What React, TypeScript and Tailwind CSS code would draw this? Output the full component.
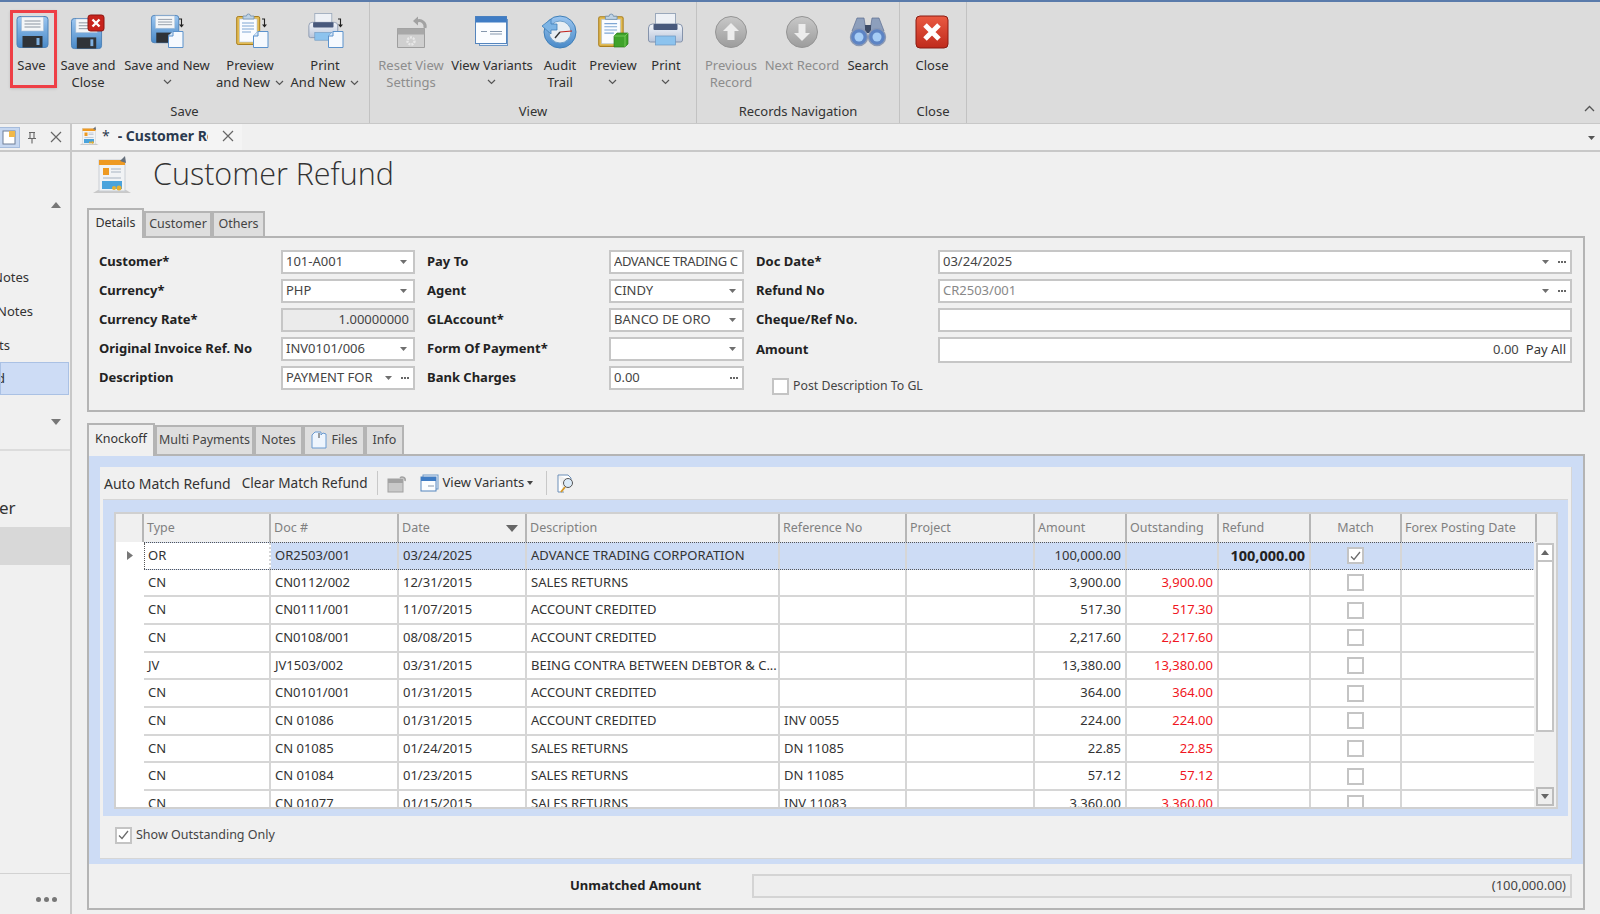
import React from 'react';

const Floppy = ({ x = 0, y = 0, s = 1 }: { x?: number; y?: number; s?: number }) => (
  <g transform={`translate(${x} ${y}) scale(${s})`}>
    <rect x="0.5" y="0.5" width="31" height="31" rx="3" fill="url(#blueG)" stroke="#4d82b8" />
    <rect x="5" y="1" width="22" height="14" fill="#f4f6f8" stroke="#a9bfd6" strokeWidth="0.6" />
    <path d="M8 5h16M8 8h16M8 11h16" stroke="#8a94a0" strokeWidth="1" />
    <rect x="6" y="20" width="20" height="11.5" fill="#2f3338" />
    <rect x="20" y="22" width="3" height="7" fill="#7fb0e0" />
  </g>
);

const NewPage = ({ x = 0, y = 0 }: { x?: number; y?: number }) => (
  <g transform={`translate(${x} ${y})`}>
    <path d="M0.5 5L5 0.5h10v16h-14.5z" fill="#f5f9fe" stroke="#5b92cc" />
    <path d="M5 0.5v4.5h-4.5" fill="#d5e5f6" stroke="#5b92cc" />
  </g>
);

const TinyArrow = ({ x = 0, y = 0 }: { x?: number; y?: number }) => (
  <g transform={`translate(${x} ${y})`}>
    <path d="M0 1h2.5v6" fill="none" stroke="#222" strokeWidth="1.1" />
    <path d="M0 6.5h5l-2.5 3z" fill="#222" />
  </g>
);

const Clipboard = ({ x = 0, y = 0, s = 1 }: { x?: number; y?: number; s?: number }) => (
  <g transform={`translate(${x} ${y}) scale(${s})`}>
    <rect x="0.7" y="3.5" width="23" height="28" rx="1.5" fill="#e3bb52" stroke="#a97f1f" />
    <rect x="3.5" y="6" width="17.5" height="23" fill="#fafcff" stroke="#b5c4d6" strokeWidth="0.6" />
    <path d="M6 10h12M6 13h12M6 16h12M6 19h9" stroke="#7ea6d4" strokeWidth="1.1" />
    <path d="M7 6V3h3.5a2 2 0 0 1 4 0H18v3z" fill="#bfd3e6" stroke="#6f8fae" strokeWidth="0.8" />
  </g>
);

const Printer = ({ x = 0, y = 0, s = 1 }: { x?: number; y?: number; s?: number }) => (
  <g transform={`translate(${x} ${y}) scale(${s})`}>
    <rect x="8" y="0.5" width="20" height="14" fill="#eef1f6" stroke="#9aa8bb" />
    <path d="M1 15a4 4 0 0 1 4-4h26a4 4 0 0 1 4 4v12a2 2 0 0 1-2 2H3a2 2 0 0 1-2-2z" fill="url(#printG)" stroke="#8593ab" />
    <rect x="6" y="11" width="24" height="6" rx="1" fill="#48597c" />
    <rect x="8" y="23" width="20" height="9" fill="#8cc3ee" stroke="#6b95bf" strokeWidth="0.7" />
  </g>
);

const IconSvg = ({ children }: { children: React.ReactNode }) => (
  <svg width="40" height="40" viewBox="0 0 40 40" className="block">
    {children}
  </svg>
);

const SaveIcon = () => <IconSvg><Floppy x={4.5} y={4} /></IconSvg>;

const SaveCloseIcon = () => (
  <IconSvg>
    <Floppy x={3} y={6} s={0.97} />
    <rect x="20" y="3" width="16" height="16" rx="2.5" fill="#c8231c" stroke="#8d1510" />
    <path d="M24.5 7.5l7 7M31.5 7.5l-7 7" stroke="#fff" strokeWidth="2.4" />
  </IconSvg>
);

const SaveNewIcon = () => (
  <IconSvg>
    <Floppy x={4} y={3} s={0.88} />
    <NewPage x={21} y={19} />
    <TinyArrow x={32} y={6} />
  </IconSvg>
);

const PreviewNewIcon = () => (
  <IconSvg>
    <Clipboard x={6} y={1} />
    <NewPage x={23} y={19} />
    <TinyArrow x={32} y={6} />
  </IconSvg>
);

const PrintNewIcon = () => (
  <IconSvg>
    <Printer x={3} y={1} s={0.85} />
    <NewPage x={23} y={19} />
    <TinyArrow x={33} y={6} />
  </IconSvg>
);

const ResetViewIcon = () => (
  <IconSvg>
    <path d="M6.5 16.5h27v19h-27z" fill="#cfcfcf" stroke="#9e9e9e" />
    <rect x="6.5" y="16.5" width="27" height="6" fill="#a8a8a8" />
    <circle cx="20" cy="29" r="3.5" fill="none" stroke="#e8e8e8" strokeWidth="2.4" strokeDasharray="2 1" />
    <path d="M26 9a6 6 0 0 1 8 7" fill="none" stroke="#a2a2a2" strokeWidth="3" />
    <path d="M27 4.5v9l-5-4.5z" fill="#a2a2a2" />
  </IconSvg>
);

const ViewVariantsIcon = () => (
  <IconSvg>
    <rect x="7.5" y="7.5" width="28" height="26" fill="#eaf1fa" stroke="#6d97c6" />
    <rect x="3.5" y="4.5" width="31" height="27" fill="#fbfdff" stroke="#5585bd" />
    <rect x="3.5" y="4.5" width="31" height="6" fill="#3f7cc4" />
    <path d="M9 19.5h6M18 19.5h12M18 22h12" stroke="#8698ad" strokeWidth="1.2" />
  </IconSvg>
);

const AuditIcon = () => (
  <IconSvg>
    <circle cx="20" cy="20" r="16" fill="url(#blueG)" stroke="#3f7fb8" />
    <circle cx="20" cy="20" r="11" fill="#e8eef3" stroke="#6fa0ca" />
    <path d="M20 20l12-1" stroke="#c2221c" strokeWidth="1.2" />
    <path d="M20 20l-5 6" stroke="#333" strokeWidth="1.4" />
    <path d="M2 14l9-7v5h6v6h-6v4z" fill="#7db4e4" stroke="#3f7fb8" strokeWidth="0.8" />
  </IconSvg>
);

const PreviewIcon = () => (
  <IconSvg>
    <Clipboard x={5} y={1} s={1.06} />
    <path d="M21 24l3-3h11v11l-3 3H21z" fill="#3fa32a" stroke="#2b7a1b" strokeWidth="0.7" />
    <path d="M21 24h11v11M32 24l3-3" fill="none" stroke="#7fd262" strokeWidth="0.8" />
  </IconSvg>
);

const PrintIcon = () => <IconSvg><Printer x={1.5} y={1} /></IconSvg>;

const RoundArrow = ({ up }: { up?: boolean }) => (
  <IconSvg>
    <circle cx="20" cy="20" r="15.5" fill="url(#grayG)" stroke="#959595" />
    <path d={up ? 'M20 11l8 8h-4.5v9h-7v-9H12z' : 'M20 29l8-8h-4.5v-9h-7v9H12z'} fill="#ececec" />
  </IconSvg>
);

const BinocularsIcon = () => (
  <IconSvg>
    <path d="M9 6h7l2 13H4z" fill="#8d9fbc" stroke="#5d6f90" strokeWidth="0.7" />
    <path d="M24 6h7l5 13H22z" fill="#8d9fbc" stroke="#5d6f90" strokeWidth="0.7" />
    <rect x="17" y="13" width="6" height="8" fill="#3d4b66" />
    <circle cx="11" cy="25" r="8.5" fill="#5d84c4" stroke="#8a98b3" strokeWidth="1.4" />
    <circle cx="29" cy="25" r="8.5" fill="#5d84c4" stroke="#8a98b3" strokeWidth="1.4" />
    <circle cx="11" cy="25" r="4.5" fill="#a6cdf6" />
    <circle cx="29" cy="25" r="4.5" fill="#a6cdf6" />
  </IconSvg>
);

const CloseIcon = () => (
  <IconSvg>
    <rect x="4" y="4" width="32" height="32" rx="4" fill="url(#redG)" stroke="#8a1b12" />
    <path d="M13 13l14 14M27 13L13 27" stroke="#fff" strokeWidth="5" />
  </IconSvg>
);

const Chevron = ({ cls }: { cls?: string }) => (
  <svg width="9" height="6" viewBox="0 0 9 6" className={`inline-block ${cls ?? ''}`}>
    <path d="M1 1l3.5 3.5L8 1" fill="none" stroke="#555" strokeWidth="1.2" />
  </svg>
);

const SmallArrow = () => (
  <svg width="7" height="4" viewBox="0 0 7 4" className="shrink-0">
    <path d="M0 0h7L3.5 4z" fill="#6f6f6f" />
  </svg>
);

const Dots = () => (
  <svg width="8" height="2" viewBox="0 0 8 2" className="shrink-0">
    <path d="M0 0h2v2H0zM3 0h2v2H3zM6 0h2v2H6z" fill="#666" />
  </svg>
);

type RibbonBtn = {
  w: string;
  icon: React.ReactNode;
  lines: string[];
  chevronBelow?: boolean;
  chevronInline?: boolean;
  disabled?: boolean;
};

const RibbonButton = ({ b, marked }: { b: RibbonBtn; marked?: boolean }) => (
  <div className={`relative flex flex-col items-center pt-[10px] text-[13px] leading-[17px] ${b.w} ${b.disabled ? 'text-[#8d8d8d]' : 'text-[#2f2f2f]'}`}>
    {b.icon}
    <div className="mt-[5px] flex flex-col items-center whitespace-nowrap">
      {b.lines.map((l, i) => (
        <span key={l} className="flex items-center gap-[5px]">
          {l}
          {b.chevronInline && i === b.lines.length - 1 && <Chevron />}
        </span>
      ))}
      {b.chevronBelow && <Chevron cls="mt-[5px]" />}
    </div>
    {marked && <div className="absolute left-[6px] top-[8px] w-[47px] h-[78px] border-[3px] border-[#ee3f46] shadow-sm" />}
  </div>
);

const RibbonGroup = ({ w, label, btns, pl }: { w: string; label: string; btns: RibbonBtn[]; pl: string }) => (
  <div className={`flex flex-col h-full border-r border-[#c2c2c2] ${w}`}>
    <div className={`flex flex-1 ${pl}`}>
      {btns.map((b, i) => (
        <RibbonButton key={b.lines.join()} b={b} marked={label === 'Save' && i === 0} />
      ))}
    </div>
    <div className="h-[24px] text-center text-[13px] leading-[24px] text-[#333]">{label}</div>
  </div>
);

const Ribbon = () => (
  <div className="relative flex h-[124px] border-t-2 border-[#5a7bab] border-b border-b-[#c8c8c8] bg-[#dcdcdc]">
    <RibbonGroup
      w="w-[370px]"
      pl="pl-[4px]"
      label="Save"
      btns={[
        { w: 'w-[55px]', icon: <SaveIcon />, lines: ['Save'] },
        { w: 'w-[58px]', icon: <SaveCloseIcon />, lines: ['Save and', 'Close'] },
        { w: 'w-[100px]', icon: <SaveNewIcon />, lines: ['Save and New'], chevronBelow: true },
        { w: 'w-[66px]', icon: <PreviewNewIcon />, lines: ['Preview', 'and New'], chevronInline: true },
        { w: 'w-[84px]', icon: <PrintNewIcon />, lines: ['Print', 'And New'], chevronInline: true },
      ]}
    />
    <RibbonGroup
      w="w-[327px]"
      pl="pl-[2px]"
      label="View"
      btns={[
        { w: 'w-[78px]', icon: <ResetViewIcon />, lines: ['Reset View', 'Settings'], disabled: true },
        { w: 'w-[84px]', icon: <ViewVariantsIcon />, lines: ['View Variants'], chevronBelow: true },
        { w: 'w-[52px]', icon: <AuditIcon />, lines: ['Audit', 'Trail'] },
        { w: 'w-[54px]', icon: <PreviewIcon />, lines: ['Preview'], chevronBelow: true },
        { w: 'w-[52px]', icon: <PrintIcon />, lines: ['Print'], chevronBelow: true },
      ]}
    />
    <RibbonGroup
      w="w-[203px]"
      pl="pl-[3px]"
      label="Records Navigation"
      btns={[
        { w: 'w-[62px]', icon: <RoundArrow up />, lines: ['Previous', 'Record'], disabled: true },
        { w: 'w-[80px]', icon: <RoundArrow />, lines: ['Next Record'], disabled: true },
        { w: 'w-[52px]', icon: <BinocularsIcon />, lines: ['Search'] },
      ]}
    />
    <RibbonGroup
      w="w-[67px]"
      pl="pl-[6px]"
      label="Close"
      btns={[{ w: 'w-[52px]', icon: <CloseIcon />, lines: ['Close'] }]}
    />
    <svg width="11" height="7" viewBox="0 0 11 7" className="absolute right-[5px] bottom-[11px]">
      <path d="M1 6l4.5-4.5L10 6" fill="none" stroke="#555" strokeWidth="1.3" />
    </svg>
  </div>
);

const SideRow = ({ text, ml }: { text: string; ml: string }) => (
  <div className="h-[34px] flex items-center overflow-hidden whitespace-nowrap text-[13px] text-[#333] shrink-0">
    <span className={ml}>{text}</span>
  </div>
);

const Sidebar = () => (
  <div className="flex flex-col w-[72px] shrink-0 border-r-2 border-[#c8c8c8] bg-[#f0f0f0]">
    <div className="h-[28px] flex items-center border-b-2 border-[#c8c8c8] shrink-0">
      <div className="w-[21px] h-[21px] -ml-[1px] bg-[#c6d7f0] border border-[#a6bcdc] flex items-center justify-center">
        <svg width="15" height="15" viewBox="0 0 15 15">
          <rect x="1" y="1" width="12" height="13" fill="#fff" stroke="#6f7f97" />
          <rect x="7" y="1" width="6" height="6" fill="#f0b84a" />
        </svg>
      </div>
      <svg width="12" height="13" viewBox="0 0 12 13" className="ml-[6px]">
        <path d="M3 1.5h6M4 1.5v6M8 1.5v6M2 7.5h8M6 7.5v5" fill="none" stroke="#666" strokeWidth="1.1" />
      </svg>
      <svg width="12" height="12" viewBox="0 0 12 12" className="ml-[12px]">
        <path d="M1 1l10 10M11 1L1 11" stroke="#666" strokeWidth="1.2" />
      </svg>
    </div>
    <div className="h-[58px] flex items-end justify-end pr-[9px] pb-[2px] shrink-0">
      <svg width="10" height="6" viewBox="0 0 10 6"><path d="M5 0l5 6H0z" fill="#777" /></svg>
    </div>
    <div className="h-[51px] shrink-0" />
    <SideRow text="Notes" ml="-ml-[7px]" />
    <SideRow text="Notes" ml="-ml-[3px]" />
    <SideRow text="ts" ml="-ml-[1px]" />
    <div className="w-[69px] h-[33px] flex items-center bg-[#cddcf5] border border-[#aac1e4] text-[13px] text-[#333] overflow-hidden -mt-[1px] shrink-0">
      <span className="-ml-[4px]">d</span>
    </div>
    <div className="h-[54px] flex items-center justify-end pr-[9px] shrink-0">
      <svg width="10" height="6" viewBox="0 0 10 6"><path d="M0 0h10L5 6z" fill="#777" /></svg>
    </div>
    <div className="h-[78px] border-t-2 border-[#dcdcdc] flex items-end shrink-0 overflow-hidden text-[17px] leading-[24px] text-[#333] pb-[7px]">
      <span className="-ml-[1px]">er</span>
    </div>
    <div className="h-[38px] bg-[#d8d8d8] shrink-0" />
    <div className="flex-1" />
    <div className="h-[41px] border-t border-[#d2d2d2] flex items-center justify-end pr-[13px] pt-[10px] gap-[3px] shrink-0">
      <span className="w-[5px] h-[5px] rounded-full bg-[#777]" />
      <span className="w-[5px] h-[5px] rounded-full bg-[#777]" />
      <span className="w-[5px] h-[5px] rounded-full bg-[#777]" />
    </div>
  </div>
);

const RefundIcon = ({ size }: { size: number }) => (
  <svg width={size} height={size} viewBox="0 0 40 40" className="shrink-0">
    <path d="M1 38l5-3h28l5 3z" fill="#c9c9c9" />
    <rect x="7" y="5" width="26" height="31" fill="#f1f3f5" stroke="#c9ced4" />
    <rect x="7" y="5" width="26" height="5" fill="#ee9a22" />
    <path d="M28 6l5-5 1 7z" fill="#66707c" />
    <rect x="11" y="13" width="6" height="7" fill="#ee9a22" />
    <path d="M19 14h10M19 17h10M11 23h18" stroke="#a7b4c2" strokeWidth="1.2" />
    <rect x="10" y="26" width="20" height="8" fill="#4aa3dc" />
    <circle cx="27" cy="33" r="2.5" fill="#e8b030" />
    <circle cx="22" cy="33" r="2" fill="#e8b030" />
  </svg>
);

type FieldProps = {
  value?: string;
  arrow?: boolean;
  dots?: boolean;
  disabled?: boolean;
  right?: boolean;
  cls?: string;
  textCls?: string;
  children?: React.ReactNode;
};

const Field = ({ value, arrow, dots, disabled, right, cls, textCls, children }: FieldProps) => (
  <div className={`h-[24px] flex items-center gap-[7px] border-2 border-[#c6c6c6] pl-[3px] pr-[4px] text-[13px] ${disabled ? 'bg-[#ebebeb]' : 'bg-white'} ${cls ?? ''}`}>
    <span className={`flex-1 min-w-0 overflow-hidden whitespace-nowrap pb-[1px] ${right ? 'text-right' : ''} ${textCls ?? 'text-[#444]'}`}>{value}</span>
    {arrow && <span className="flex items-center pr-[2px]"><SmallArrow /></span>}
    {dots && <Dots />}
    {children}
  </div>
);

const FormRow = ({ label, children, last }: { label: string; children: React.ReactNode; last?: boolean }) => (
  <div className={`flex items-center ${last ? '' : 'mb-[5px]'}`}>
    <div className="w-[182px] shrink-0 whitespace-nowrap text-[13px] font-bold text-[#222]">{label}</div>
    <div className="flex-1 min-w-0">{children}</div>
  </div>
);

const Box = ({ checked, cls }: { checked?: boolean; cls?: string }) => (
  <div className={`w-[17px] h-[17px] border-2 border-[#c4c4c4] bg-white flex items-center justify-center shrink-0 ${cls ?? ''}`}>
    {checked && (
      <svg width="11" height="10" viewBox="0 0 11 10">
        <path d="M1 5.5l3 3L10 1" fill="none" stroke="#6c6c6c" strokeWidth="1.3" />
      </svg>
    )}
  </div>
);

const Tab = ({ label, active, cls, children }: { label: string; active?: boolean; cls: string; children?: React.ReactNode }) => (
  <div
    className={`flex items-center justify-center gap-[5px] text-[12.5px] border-2 border-b-0 border-[#b4b4b4] whitespace-nowrap ${cls} ${
      active ? 'bg-[#f0f0f0] text-[#333] relative z-10 -mb-[2px]' : 'bg-[#dedede] text-[#444] self-end pb-[1px]'
    }`}
  >
    {children}
    {label}
  </div>
);

const DetailsPanel = () => (
  <div>
    <div className="flex h-[28px]">
      <Tab label="Details" active cls="w-[57px] h-[30px] pb-[2px]" />
      <Tab label="Customer" cls="w-[68px] h-[25px]" />
      <Tab label="Others" cls="w-[53px] h-[25px]" />
    </div>
    <div className="w-[1498px] h-[176px] border-2 border-[#b4b4b4] flex gap-[12px] pl-[10px] pt-[12px]">
      <div className="w-[316px]">
        <FormRow label="Customer*"><Field value="101-A001" arrow /></FormRow>
        <FormRow label="Currency*"><Field value="PHP" arrow /></FormRow>
        <FormRow label="Currency Rate*"><Field value="1.00000000" disabled right /></FormRow>
        <FormRow label="Original Invoice Ref. No"><Field value="INV0101/006" arrow /></FormRow>
        <FormRow label="Description"><Field value="PAYMENT FOR" arrow dots /></FormRow>
      </div>
      <div className="w-[317px]">
        <FormRow label="Pay To"><Field value="ADVANCE TRADING C" textCls="text-[#444] tracking-[-0.4px]" /></FormRow>
        <FormRow label="Agent"><Field value="CINDY" arrow /></FormRow>
        <FormRow label="GLAccount*"><Field value="BANCO DE ORO" arrow /></FormRow>
        <FormRow label="Form Of Payment*"><Field arrow /></FormRow>
        <FormRow label="Bank Charges"><Field value="0.00" dots /></FormRow>
      </div>
      <div className="w-[816px]">
        <FormRow label="Doc Date*"><Field value="03/24/2025" arrow dots /></FormRow>
        <FormRow label="Refund No"><Field value="CR2503/001" arrow dots textCls="text-[#888]" /></FormRow>
        <FormRow label="Cheque/Ref No."><Field /></FormRow>
        <FormRow label="Amount">
          <Field value="0.00" right cls="h-[26px]"><span className="text-[#333]">Pay All</span></Field>
        </FormRow>
        <div className="flex items-center gap-[4px] ml-[16px] mt-[14px] text-[12.3px] text-[#444]">
          <Box />
          Post Description To GL
        </div>
      </div>
    </div>
  </div>
);

type Row = { type: string; doc: string; date: string; desc: string; ref: string; amt: string; out: string; refund?: string };

const rows: Row[] = [
  { type: 'OR', doc: 'OR2503/001', date: '03/24/2025', desc: 'ADVANCE TRADING CORPORATION', ref: '', amt: '100,000.00', out: '', refund: '100,000.00' },
  { type: 'CN', doc: 'CN0112/002', date: '12/31/2015', desc: 'SALES RETURNS', ref: '', amt: '3,900.00', out: '3,900.00' },
  { type: 'CN', doc: 'CN0111/001', date: '11/07/2015', desc: 'ACCOUNT CREDITED', ref: '', amt: '517.30', out: '517.30' },
  { type: 'CN', doc: 'CN0108/001', date: '08/08/2015', desc: 'ACCOUNT CREDITED', ref: '', amt: '2,217.60', out: '2,217.60' },
  { type: 'JV', doc: 'JV1503/002', date: '03/31/2015', desc: 'BEING CONTRA BETWEEN DEBTOR & C...', ref: '', amt: '13,380.00', out: '13,380.00' },
  { type: 'CN', doc: 'CN0101/001', date: '01/31/2015', desc: 'ACCOUNT CREDITED', ref: '', amt: '364.00', out: '364.00' },
  { type: 'CN', doc: 'CN 01086', date: '01/31/2015', desc: 'ACCOUNT CREDITED', ref: 'INV 0055', amt: '224.00', out: '224.00' },
  { type: 'CN', doc: 'CN 01085', date: '01/24/2015', desc: 'SALES RETURNS', ref: 'DN 11085', amt: '22.85', out: '22.85' },
  { type: 'CN', doc: 'CN 01084', date: '01/23/2015', desc: 'SALES RETURNS', ref: 'DN 11085', amt: '57.12', out: '57.12' },
  { type: 'CN', doc: 'CN 01077', date: '01/15/2015', desc: 'SALES RETURNS', ref: 'INV 11083', amt: '3,360.00', out: '3,360.00' },
];

const colTemplate = 'grid grid-cols-[127px_128px_128px_253px_127px_128px_92px_92px_92px_91px_135px]';

const headers = ['Type', 'Doc #', 'Date', 'Description', 'Reference No', 'Project', 'Amount', 'Outstanding', 'Refund', 'Match', 'Forex Posting Date'];

const Cell = ({ children, right, cls }: { children?: React.ReactNode; right?: boolean; cls?: string }) => (
  <div className={`flex items-center px-[4px] border-r-2 border-[#d6d6d6] overflow-hidden whitespace-nowrap ${right ? 'justify-end' : ''} ${cls ?? ''}`}>
    {children}
  </div>
);

const DataGrid = () => (
  <div className="w-[1444px] h-[297px] border-2 border-[#d0d0d0] bg-white overflow-hidden flex flex-col">
    <div className="flex h-[28px] shrink-0 bg-[#f0f0f0] text-[12.5px] text-[#808080]">
      <div className="w-[28px] shrink-0 border-r-2 border-[#b6b6b6]" />
      <div className={colTemplate}>
        {headers.map((h) => (
          <div key={h} className={`flex items-center px-[3px] border-r-2 border-[#b6b6b6] whitespace-nowrap ${h === 'Match' ? 'justify-center' : ''} ${h === 'Date' ? 'justify-between pr-[7px]' : ''}`}>
            {h}
            {h === 'Date' && <svg width="12" height="7" viewBox="0 0 12 7"><path d="M0 0h12L6 7z" fill="#666" /></svg>}
          </div>
        ))}
      </div>
    </div>
    <div className="flex flex-1 min-h-0">
      <div className="flex-1 min-w-0 overflow-hidden">
        {rows.map((r, i) => (
          <div key={r.doc} className="flex h-[27.67px] text-[13px] text-[#333]">
            <div className="w-[28px] shrink-0 flex items-center justify-center">
              {i === 0 && <svg width="6" height="9" viewBox="0 0 6 9"><path d="M0 0l6 4.5L0 9z" fill="#777" /></svg>}
            </div>
            <div className={`${colTemplate} flex-1 ${i === 0 ? 'border-y border-dotted border-[#555] bg-[#cddcf5]' : 'border-b-2 border-[#d6d6d6]'}`}>
              <Cell cls={i === 0 ? 'bg-white border-l border-dotted border-l-[#555] pl-[3px]' : ''}>{r.type}</Cell>
              <Cell>{r.doc}</Cell>
              <Cell>{r.date}</Cell>
              <Cell>{r.desc}</Cell>
              <Cell>{r.ref}</Cell>
              <Cell />
              <Cell right>{r.amt}</Cell>
              <Cell right cls="text-[#f01622]">{r.out}</Cell>
              <Cell right cls="font-bold text-[14.5px] text-[#222]">{r.refund}</Cell>
              <Cell cls="justify-center"><Box checked={i === 0} /></Cell>
              <Cell cls={i === 0 ? 'border-r border-dotted border-r-[#555]' : 'border-r-0'} />
            </div>
          </div>
        ))}
      </div>
      <div className="w-[22px] shrink-0 bg-[#f0f0f0] flex flex-col pl-[2px] pr-[2px] pt-[1px]">
        <div className="h-[19px] border-2 border-[#c4c4c4] bg-white flex items-center justify-center shrink-0">
          <svg width="8" height="5" viewBox="0 0 8 5"><path d="M4 0l4 5H0z" fill="#666" /></svg>
        </div>
        <div className="h-[170px] border-2 border-t-0 border-[#c4c4c4] bg-white shrink-0" />
        <div className="flex-1" />
        <div className="h-[19px] mb-[1px] border-2 border-[#bcbcbc] bg-[#eeeeee] flex items-center justify-center shrink-0">
          <svg width="8" height="5" viewBox="0 0 8 5"><path d="M0 0h8L4 5z" fill="#666" /></svg>
        </div>
      </div>
    </div>
  </div>
);

const KnockoffPanel = () => (
  <div className="mt-[11px]">
    <div className="flex h-[31px]">
      <Tab label="Knockoff" active cls="w-[68px] h-[33px] pb-[3px]" />
      <Tab label="Multi Payments" cls="w-[99px] h-[29px]" />
      <Tab label="Notes" cls="w-[49px] h-[29px]" />
      <Tab label="Files" cls="w-[62px] h-[29px]">
        <svg width="16" height="18" viewBox="0 0 16 18">
          <path d="M1 4l3-3h6v3l2-2 3 1v14H1z" fill="#eef5fd" stroke="#6a9ad0" />
          <path d="M8 2v5" stroke="#444" strokeWidth="1" />
        </svg>
      </Tab>
      <Tab label="Info" cls="w-[39px] h-[29px]" />
    </div>
    <div className="w-[1498px] h-[456px] border-2 border-[#b4b4b4] flex flex-col">
      <div className="h-[408px] shrink-0 bg-[#cddcf5] pl-[11px] pr-[11px] pt-[11px] pb-[5px]">
        <div className="h-full bg-[#f0f0f0] border-b border-r border-[#d6d6d6] flex flex-col">
          <div className="h-[32px] shrink-0 flex items-center pl-[4px] text-[14px] text-[#333] whitespace-nowrap">
            <span>Auto Match Refund</span>
            <span className="ml-[11px] text-[13.6px]">Clear Match Refund</span>
            <span className="ml-[9px] w-px h-[24px] bg-[#c8c8c8]" />
            <svg width="20" height="20" viewBox="0 0 20 20" className="ml-[9px]">
              <rect x="1" y="6" width="15" height="13" fill="#c9c9c9" stroke="#a0a0a0" />
              <rect x="1" y="6" width="15" height="4" fill="#a2a2a2" />
              <path d="M13 5a3 3 0 0 1 5 3" fill="none" stroke="#a2a2a2" strokeWidth="1.6" />
            </svg>
            <svg width="19" height="18" viewBox="0 0 19 18" className="ml-[13px]">
              <rect x="3" y="1" width="15" height="14" fill="#eaf1fa" stroke="#6d97c6" />
              <rect x="1" y="3" width="15" height="14" fill="#fbfdff" stroke="#5585bd" />
              <rect x="1" y="3" width="15" height="4" fill="#3f7cc4" />
              <path d="M8 12h6" stroke="#8698ad" />
            </svg>
            <span className="ml-[4px] text-[13px]">View Variants</span>
            <svg width="6" height="4" viewBox="0 0 6 4" className="ml-[3px]"><path d="M0 0h6L3 4z" fill="#444" /></svg>
            <span className="ml-[13px] w-px h-[24px] bg-[#c8c8c8]" />
            <svg width="18" height="19" viewBox="0 0 18 19" className="ml-[10px]">
              <path d="M1 1h10l3 3v3M1 1v17h6" fill="#fff" stroke="#6d8fb8" />
              <circle cx="11" cy="9" r="4.5" fill="#dcebf8" stroke="#555" />
              <path d="M8 13l-4 5" stroke="#d59a2a" strokeWidth="2" />
            </svg>
          </div>
          <div className="h-[317px] shrink-0 ml-[3px] mr-[3px] bg-[#cddcf5] border-t border-[#d6d6d6] pl-[11px] pt-[12px] overflow-hidden">
            <DataGrid />
          </div>
          <div className="flex-1 flex items-center pl-[15px] pb-[4px] gap-[4px] text-[12.5px] text-[#444]">
            <Box checked />
            Show Outstanding Only
          </div>
        </div>
      </div>
      <div className="flex-1 flex items-center pl-[481px]">
        <span className="w-[182px] shrink-0 text-[13px] font-bold text-[#222]">Unmatched Amount</span>
        <div className="w-[820px] h-[24px] border-2 border-[#d4d4d4] bg-[#eeeeee] flex items-center justify-end pr-[4px] text-[13px] text-[#444]">(100,000.00)</div>
      </div>
    </div>
  </div>
);

export default function App() {
  return (
    <div className="w-[1600px] h-[914px] overflow-hidden flex flex-col bg-[#f0f0f0] font-['Noto_Sans',sans-serif]">
      <svg width="0" height="0" className="absolute">
        <defs>
          <linearGradient id="blueG" x1="0" y1="0" x2="0" y2="1">
            <stop offset="0" stopColor="#9cc6f0" />
            <stop offset="1" stopColor="#4a8ac8" />
          </linearGradient>
          <linearGradient id="grayG" x1="0" y1="0" x2="0" y2="1">
            <stop offset="0" stopColor="#c8c8c8" />
            <stop offset="1" stopColor="#9c9c9c" />
          </linearGradient>
          <linearGradient id="redG" x1="0" y1="0" x2="0" y2="1">
            <stop offset="0" stopColor="#ea5a42" />
            <stop offset="1" stopColor="#bf2a1c" />
          </linearGradient>
          <linearGradient id="printG" x1="0" y1="0" x2="0" y2="1">
            <stop offset="0" stopColor="#f4f6fa" />
            <stop offset="1" stopColor="#b9c5da" />
          </linearGradient>
        </defs>
      </svg>
      <Ribbon />
      <div className="flex flex-1 min-h-0">
        <Sidebar />
        <div className="flex-1 min-w-0 flex flex-col">
          <div className="h-[28px] shrink-0 flex border-b-2 border-[#c8c8c8] relative">
            <div className="w-[170px] flex items-center bg-[#f4f4f4] pl-[7px] pb-[3px] text-[14px] font-bold text-[#2b3a4f] whitespace-nowrap">
              <RefundIcon size={20} />
              <span className="ml-[3px] font-normal">*</span>
              <span className="ml-[8px] w-[90px] overflow-hidden">- Customer Refund</span>
              <svg width="12" height="12" viewBox="0 0 12 12" className="ml-[14px] shrink-0">
                <path d="M1 1l10 10M11 1L1 11" stroke="#666" strokeWidth="1.2" />
              </svg>
            </div>
            <svg width="7" height="4" viewBox="0 0 7 4" className="absolute right-[5px] top-[12px]"><path d="M0 0h7L3.5 4z" fill="#555" /></svg>
          </div>
          <div className="pl-[15px]">
            <div className="h-[56px] flex items-start">
              <div className="ml-[5px] pt-[3px]"><RefundIcon size={40} /></div>
              <h1 className="ml-[21px] text-[30.5px] leading-[42px] text-[#333] font-light font-['Open_Sans',sans-serif]">Customer Refund</h1>
            </div>
            <DetailsPanel />
            <KnockoffPanel />
          </div>
        </div>
      </div>
    </div>
  );
}
